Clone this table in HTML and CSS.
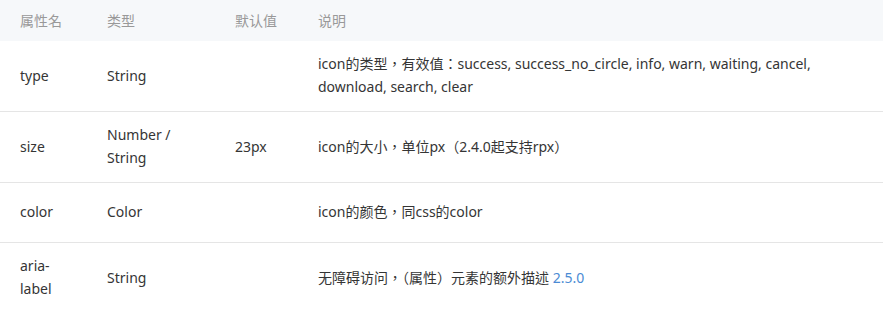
FILE: index.html
```html
<!DOCTYPE html>
<html>
<head>
<meta charset="utf-8">
<link rel="stylesheet" href="styles.css">
</head>
<body>
<table class="props">
  <colgroup>
    <col class="c-name">
    <col class="c-type">
    <col class="c-def">
    <col class="c-desc">
  </colgroup>
  <thead>
    <tr class="head">
      <th>属性名</th>
      <th>类型</th>
      <th>默认值</th>
      <th>说明</th>
    </tr>
  </thead>
  <tbody>
    <tr class="r1">
      <td>type</td>
      <td>String</td>
      <td></td>
      <td>icon的类型，有效值：success, success_no_circle, info, warn, waiting, cancel, download, search, clear</td>
    </tr>
    <tr class="r2">
      <td>size</td>
      <td>Number / String</td>
      <td>23px</td>
      <td>icon的大小，单位px（2.4.0起支持rpx）</td>
    </tr>
    <tr class="r3">
      <td>color</td>
      <td>Color</td>
      <td></td>
      <td>icon的颜色，同css的color</td>
    </tr>
    <tr class="r4">
      <td>aria-label</td>
      <td>String</td>
      <td></td>
      <td>无障碍访问，（属性）元素的额外描述 <a class="ver" href="#">2.5.0</a></td>
    </tr>
  </tbody>
</table>
</body>
</html>
```

FILE: styles.css
```css
html, body {
  margin: 0;
  padding: 0;
  background: #ffffff;
}
body {
  font-family: "Noto Sans", "Noto Sans CJK TC", sans-serif;
  font-size: 14px;
  color: #353535;
}
.props {
  width: 883px;
  border-collapse: collapse;
  table-layout: fixed;
}
.c-name { width: 87px; }
.c-type { width: 128px; }
.c-def { width: 83px; }
.c-desc { width: 585px; }
.props th {
  background: #f6f8fa;
  color: #999999;
  font-weight: normal;
  text-align: left;
  height: 41px;
  padding: 0 20px;
  line-height: 23px;
  box-sizing: border-box;
}
.props td {
  padding: 11px 20px 13px;
  line-height: 23px;
  vertical-align: middle;
  border-bottom: 1px solid #e5e5e5;
  word-wrap: break-word;
}
.r1 td, .r2 td { height: 46px; }
.r3 td { height: 35px; }
.r4 td { height: 42px; border-bottom: none; }
.ver {
  color: #4b8bd4;
  text-decoration: none;
}
```
